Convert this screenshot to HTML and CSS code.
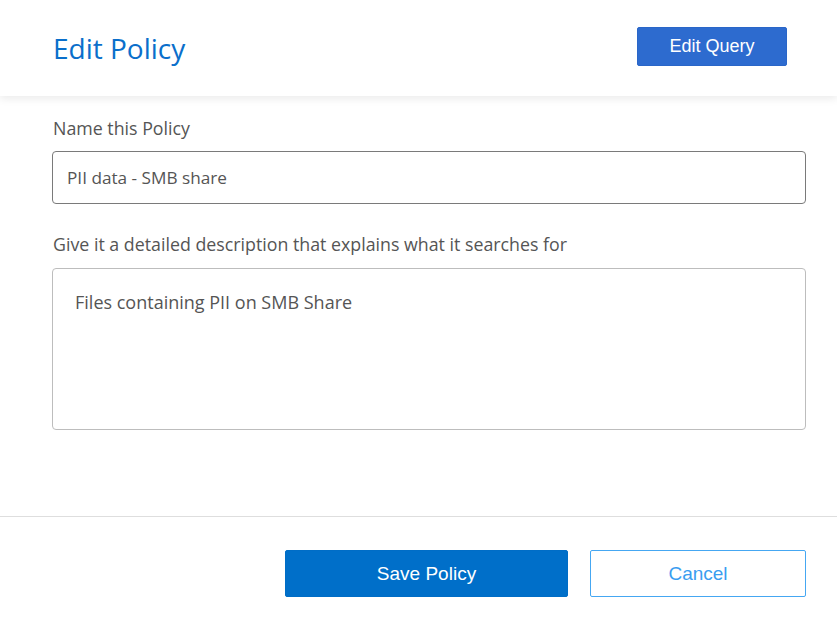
FILE: index.html
```html
<!DOCTYPE html>
<html>
<head>
<meta charset="utf-8">
<link rel="stylesheet" href="styles.css">
</head>
<body>
<div class="dialog">
  <header class="header">
    <h1 class="title">Edit Policy</h1>
    <button class="btn btn-query">Edit Query</button>
  </header>
  <main class="body">
    <label class="label">Name this Policy</label>
    <div class="input">PII data - SMB share</div>
    <label class="label label-desc">Give it a detailed description that explains what it searches for</label>
    <div class="textarea">Files containing PII on SMB Share</div>
  </main>
  <footer class="footer">
    <button class="btn btn-save">Save Policy</button>
    <button class="btn btn-cancel">Cancel</button>
  </footer>
</div>
</body>
</html>
```
FILE: styles.css
```css
* { box-sizing: border-box; }
html, body { margin: 0; padding: 0; background: #fff; }
body { width: 837px; height: 626px; overflow: hidden; font-family: "Open Sans", "Noto Sans", sans-serif; }
.dialog { display: flex; flex-direction: column; height: 626px; }
.header {
  height: 96px;
  display: flex;
  align-items: center;
  justify-content: space-between;
  padding: 0 50px 0 53px;
  box-shadow: 0 3px 8px rgba(0,0,0,0.08);
  position: relative;
  z-index: 1;
}
.title {
  margin: 0;
  font-weight: 400;
  font-size: 28px;
  color: #0a6fcb;
}
.btn {
  font-family: "Liberation Sans", Arial, sans-serif;
  border-radius: 2px;
  cursor: pointer;
}
.btn-query {
  width: 150px;
  height: 39px;
  background: #2d6bcf;
  border: 1px solid #2a66c8;
  color: #fff;
  font-size: 18px;
  margin-top: -4px;
}
.body {
  flex: 1;
  padding: 20px 31px 0 52px;
  display: flex;
  flex-direction: column;
}
.label {
  font-size: 17.8px;
  color: #555;
  padding-left: 1px;
  line-height: 24px;
}
.input {
  margin-top: 11px;
  height: 53px;
  border: 1px solid #7a7a7a;
  border-radius: 4px;
  padding: 0 14px;
  display: flex;
  align-items: center;
  font-size: 17.2px;
  color: #555;
}
.label-desc { margin-top: 28px; }
.textarea {
  margin-top: 12px;
  height: 162px;
  border: 1px solid #bdbdbd;
  border-radius: 4px;
  padding: 20px 22px;
  font-size: 18px;
  color: #555;
  line-height: 26px;
}
.footer {
  border-top: 1px solid #dedede;
  height: 110px;
  display: flex;
  justify-content: flex-end;
  align-items: flex-start;
  padding: 33px 31px 0 0;
  gap: 22px;
}
.btn-save {
  width: 283px;
  height: 47px;
  background: #006fc9;
  border: 1px solid #006dc6;
  color: #fff;
  font-size: 19px;
}
.btn-cancel {
  width: 216px;
  height: 47px;
  background: #fff;
  border: 1px solid #45a7f2;
  color: #3a9df0;
  font-size: 19px;
}
```
